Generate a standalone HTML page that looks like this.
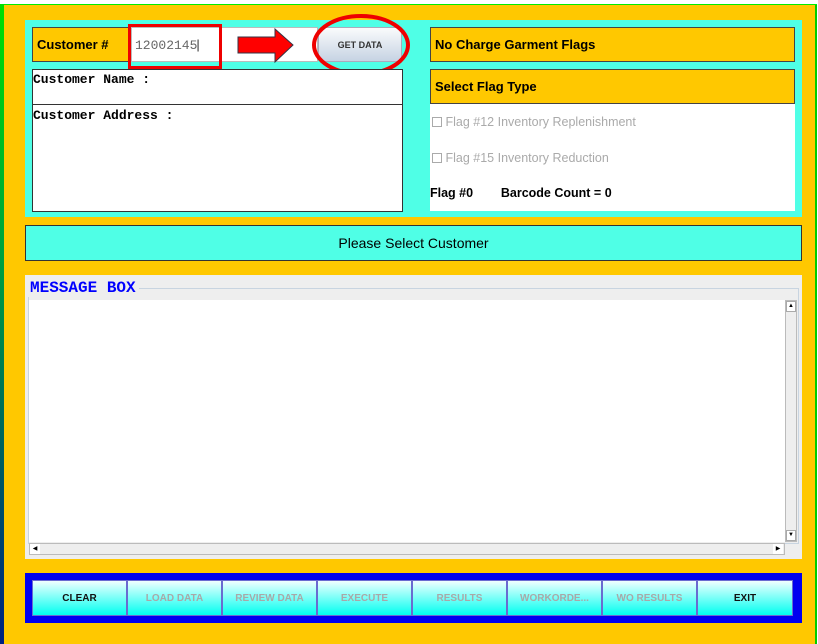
<!DOCTYPE html>
<html><head><style>
*{margin:0;padding:0;box-sizing:border-box}
body{width:818px;height:644px;position:relative;background:#fff;overflow:hidden;font-family:"Liberation Sans",sans-serif}
.a{position:absolute}
.lbl{background:#FFC800;border:1px solid #444;font-weight:bold;font-size:13px;display:flex;align-items:center;padding-left:4px}
.mono{font-family:"Liberation Mono",monospace;font-weight:bold;font-size:13px}
.btn{position:absolute;top:580px;height:36px;width:95px;background:linear-gradient(#f0ffff,#00fff0);border:1px solid #6a6ad0;font-size:10px;font-weight:bold;display:flex;align-items:center;justify-content:center;color:#a8a8a8}
</style></head><body>
<div class="a" style="left:0;top:4px;width:816px;height:640px;background:linear-gradient(#00e000,#00a040 40%,#002080)"></div>
<div class="a" style="left:4px;top:5px;width:811px;height:639px;background:#FFC800"></div>
<div class="a" style="left:815px;top:4px;width:2px;height:640px;background:#0c0"></div>
<div class="a" style="left:4px;top:4px;width:813px;height:1px;background:#0e0"></div>

<div class="a" style="left:25px;top:20px;width:777px;height:197px;background:#4FFFE6"></div>
<div class="a lbl" style="left:32px;top:27px;width:97px;height:35px">Customer #</div>
<div class="a" style="left:131px;top:27px;width:187px;height:35px;background:#fff;border:1px solid #bbb"></div>
<div class="a" style="left:135px;top:37px;font-family:'Liberation Mono',monospace;font-size:13px;color:#666">12002145<span style="color:#333;font-weight:100;font-family:'Liberation Sans';margin-left:-1px">|</span></div>
<div class="a" style="left:128px;top:24px;width:94px;height:45px;border:3px solid #e00"></div>
<svg class="a" style="left:236px;top:27px" width="60" height="37"><polygon points="2,10 39,10 39,2 57,18 39,35 39,26 2,26" fill="#f00" stroke="#334" stroke-width="1"/></svg>
<div class="a" style="left:318px;top:27px;width:84px;height:35px;background:linear-gradient(#fafbfc,#c6d3e3);border:1px solid #aab;border-radius:4px;font-size:9px;font-weight:bold;color:#333;display:flex;align-items:center;justify-content:center">GET DATA</div>
<svg class="a" style="left:310px;top:14px" width="100" height="64"><ellipse cx="51" cy="31" rx="47" ry="29" fill="none" stroke="#e00" stroke-width="4"/></svg>
<div class="a mono" style="left:32px;top:69px;width:371px;height:36px;background:#fff;border:1px solid #333;padding:2px 0">Customer Name :</div>
<div class="a mono" style="left:32px;top:104px;width:371px;height:108px;background:#fff;border:1px solid #333;padding:3px 0">Customer Address :</div>

<div class="a lbl" style="left:430px;top:27px;width:365px;height:35px">No Charge Garment Flags</div>
<div class="a lbl" style="left:430px;top:69px;width:365px;height:35px">Select Flag Type</div>
<div class="a" style="left:430px;top:104px;width:365px;height:107px;background:#fff;font-size:12.5px;color:#aaa">
<div class="a" style="left:2px;top:11px"><span style="display:inline-block;width:10px;height:10px;border:1px solid #aaa;vertical-align:-1px"></span> Flag #12 Inventory Replenishment</div>
<div class="a" style="left:2px;top:47px"><span style="display:inline-block;width:10px;height:10px;border:1px solid #aaa;vertical-align:-1px"></span> Flag #15 Inventory Reduction</div>
<div class="a" style="left:0;top:82px;color:#000;font-weight:bold">Flag #0&nbsp;&nbsp;&nbsp;&nbsp;&nbsp;&nbsp;&nbsp;&nbsp;Barcode Count = 0</div>
</div>

<div class="a" style="left:25px;top:225px;width:777px;height:36px;background:#4FFFE6;border:1px solid #333;font-size:14px;display:flex;align-items:center;justify-content:center">Please Select Customer</div>

<div class="a" style="left:25px;top:275px;width:777px;height:284px;background:#eee"></div>
<div class="a" style="left:28px;top:288px;width:771px;height:256px;border:1px solid #c8d4e0"></div>
<div class="a" style="left:28px;top:279px;background:#eee;padding:0 3px 0 2px;font-family:'Liberation Mono',monospace;font-weight:bold;font-size:16px;color:#00f">MESSAGE BOX</div>
<div class="a" style="left:29px;top:300px;width:756px;height:242px;background:#fff"></div>
<div class="a" style="left:785px;top:300px;width:12px;height:242px;background:#eee;border:1px solid #bbb"></div>
<div class="a" style="left:786px;top:301px;width:10px;height:11px;background:#fff;border:1px solid #aaa;font-size:6px;text-align:center;line-height:9px">▲</div>
<div class="a" style="left:786px;top:530px;width:10px;height:11px;background:#fff;border:1px solid #aaa;font-size:6px;text-align:center;line-height:9px">▼</div>
<div class="a" style="left:29px;top:543px;width:756px;height:12px;background:#eee;border:1px solid #bbb"></div>
<div class="a" style="left:30px;top:544px;width:10px;height:10px;background:#fff;font-size:6px;line-height:10px;text-align:center">◀</div>
<div class="a" style="left:773px;top:544px;width:10px;height:10px;background:#fff;font-size:6px;line-height:10px;text-align:center">▶</div>

<div class="a" style="left:25px;top:573px;width:777px;height:50px;background:#0000f0"></div>
<div class="btn" style="left:32px;color:#111">CLEAR</div>
<div class="btn" style="left:127px">LOAD DATA</div>
<div class="btn" style="left:222px">REVIEW DATA</div>
<div class="btn" style="left:317px">EXECUTE</div>
<div class="btn" style="left:412px">RESULTS</div>
<div class="btn" style="left:507px">WORKORDE...</div>
<div class="btn" style="left:602px">WO RESULTS</div>
<div class="btn" style="left:697px;width:96px;color:#111">EXIT</div>
</body></html>
